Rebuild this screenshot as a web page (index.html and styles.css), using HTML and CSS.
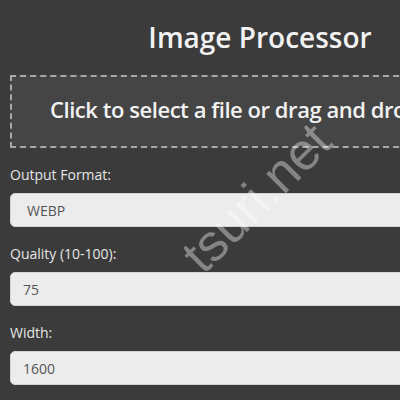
FILE: index.html
```html
<!DOCTYPE html>
<html lang="en">
<head>
<meta charset="utf-8">
<title>Image Processor</title>
<link rel="stylesheet" href="styles.css">
</head>
<body>
  <div class="page">
    <h1 class="title">Image Processor</h1>
    <div class="drop">Click to select a file or drag and drop an image here</div>
    <div class="field">
      <label class="label" for="fmt">Output Format:</label>
      <select class="control select" id="fmt">
        <option>WEBP</option>
        <option>JPEG</option>
        <option>PNG</option>
      </select>
    </div>
    <div class="field">
      <label class="label" for="q">Quality (10-100):</label>
      <input class="control" id="q" type="text" value="75">
    </div>
    <div class="field">
      <label class="label" for="w">Width:</label>
      <input class="control" id="w" type="text" value="1600">
    </div>
    <div class="field">
      <label class="label" for="h">Height:</label>
      <input class="control" id="h" type="text" value="">
    </div>
  </div>
  <div class="watermark">tsuri.net</div>
</body>
</html>
```
FILE: styles.css
```css
html, body {
  margin: 0;
  height: 100%;
  overflow: hidden;
}

body {
  background: #3b3b3b;
  font-family: "Open Sans", "Noto Sans", sans-serif;
  position: relative;
}

.page {
  width: 500px;
  padding: 0 10px;
}

.title {
  margin: 19px 0 20px;
  font-size: 28px;
  line-height: 36px;
  font-weight: 600;
  text-align: center;
  color: #f2f2f2;
}

.drop {
  border: 2px dashed #a8a8a8;
  background: #454545;
  padding: 16px 38px 21px;
  font-size: 22px;
  line-height: 32px;
  font-weight: 600;
  letter-spacing: -0.45px;
  white-space: nowrap;
  color: #f2f2f2;
}

.field {
  margin-top: 18px;
}

.label {
  display: block;
  font-size: 14px;
  line-height: 18px;
  margin-bottom: 9px;
  color: #e6e6e6;
}

.control {
  display: block;
  box-sizing: border-box;
  width: 100%;
  height: 34px;
  margin: 0;
  border: 1px solid #d4d4d4;
  border-radius: 5px;
  background: #ececec;
  padding: 0 12px;
  font-family: "Open Sans", "Noto Sans", sans-serif;
  font-size: 14px;
  color: #555555;
}

.watermark {
  position: absolute;
  left: 212px;
  top: 224px;
  font-family: "Liberation Sans", Arial, sans-serif;
  font-size: 52px;
  line-height: 60px;
  color: rgba(255, 255, 255, 0.38);
  transform: rotate(-45deg);
  transform-origin: left bottom;
  white-space: nowrap;
  pointer-events: none;
}
```
